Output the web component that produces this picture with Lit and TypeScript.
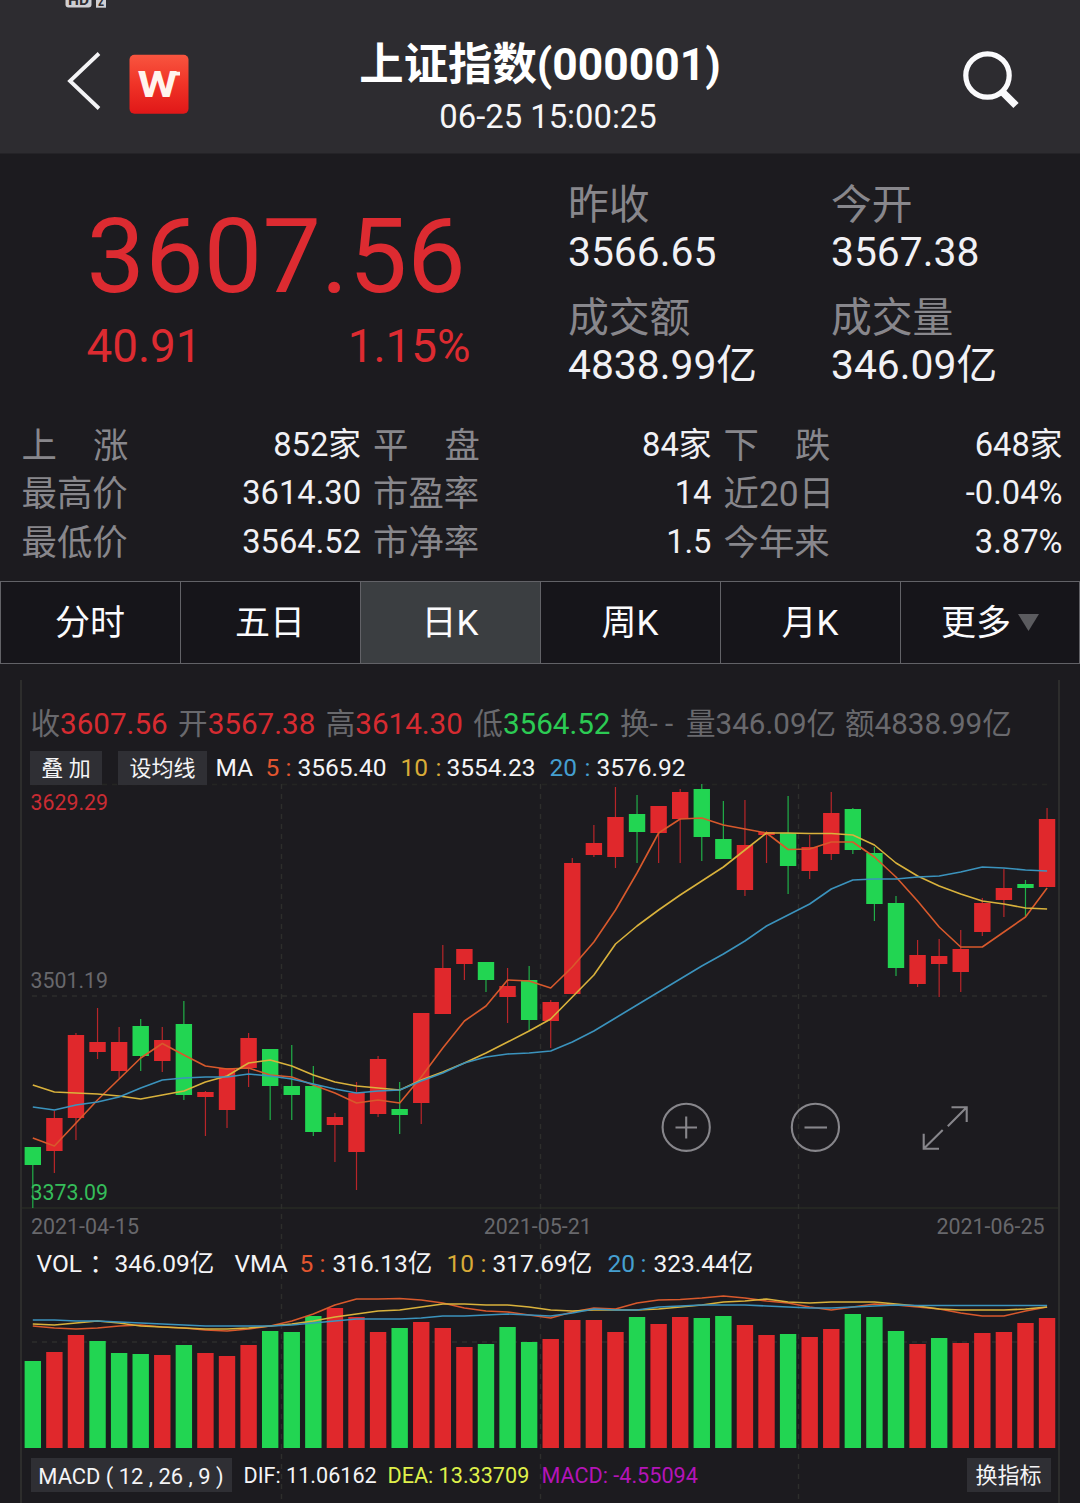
import { LitElement, html, svg, css } from "lit";
import { customElement } from "lit/decorators.js";
import { classMap } from "lit/directives/class-map.js";

type Dir = "r" | "g";
/** direction, body top, body bottom, wick top, wick bottom, volume bar top */
type Bar = [Dir, number, number, number, number, number];

const BARS: Bar[] = [
  ["g", 1147, 1165, 1147, 1208, 1361],
  ["r", 1118, 1151, 1111, 1173, 1352],
  ["r", 1035, 1118, 1033, 1140, 1335],
  ["r", 1042, 1052, 1008, 1059, 1341],
  ["r", 1042, 1071, 1027, 1078, 1353],
  ["g", 1026, 1056, 1019, 1071, 1354],
  ["r", 1040, 1061, 1027, 1072, 1355],
  ["g", 1024, 1095, 1001, 1100, 1345],
  ["r", 1092, 1097, 1091, 1136, 1353],
  ["r", 1068, 1110, 1068, 1128, 1356],
  ["r", 1038, 1068, 1033, 1087, 1345],
  ["g", 1049, 1086, 1049, 1120, 1331],
  ["g", 1086, 1095, 1045, 1120, 1332],
  ["g", 1086, 1132, 1066, 1136, 1316],
  ["r", 1117, 1125, 1113, 1162, 1308],
  ["r", 1093, 1152, 1082, 1190, 1317],
  ["r", 1059, 1114, 1056, 1117, 1332],
  ["g", 1109, 1115, 1082, 1134, 1328],
  ["r", 1013, 1103, 1013, 1124, 1322],
  ["r", 968, 1014, 945, 1014, 1328],
  ["r", 949, 964, 949, 980, 1347],
  ["g", 962, 980, 962, 992, 1344],
  ["r", 986, 997, 968, 1023, 1327],
  ["g", 980, 1020, 966, 1031, 1342],
  ["r", 1002, 1021, 1000, 1048, 1339],
  ["r", 863, 994, 858, 994, 1320],
  ["r", 843, 855, 825, 857, 1320],
  ["r", 817, 857, 787, 868, 1332],
  ["g", 814, 832, 795, 863, 1317],
  ["r", 806, 833, 806, 863, 1324],
  ["r", 792, 819, 789, 863, 1317],
  ["g", 789, 837, 784, 861, 1318],
  ["g", 839, 859, 801, 859, 1316],
  ["r", 845, 890, 800, 896, 1325],
  ["r", 832, 835, 831, 863, 1335],
  ["g", 833, 866, 796, 894, 1334],
  ["r", 847, 871, 835, 879, 1337],
  ["r", 813, 854, 792, 860, 1329],
  ["g", 809, 850, 808, 854, 1314],
  ["g", 853, 904, 847, 921, 1317],
  ["g", 903, 968, 896, 976, 1331],
  ["r", 955, 984, 940, 987, 1344],
  ["r", 956, 964, 939, 997, 1338],
  ["r", 949, 972, 930, 992, 1343],
  ["r", 903, 932, 898, 936, 1333],
  ["r", 888, 900, 869, 917, 1332],
  ["g", 884, 888, 880, 917, 1323],
  ["r", 819, 887, 808, 887, 1318],
];

/* The volume pane colours by session change, which differs from the body colour on these days. */
const VOLUME_DIR: Record<number, Dir> = { 3: "g", 4: "g", 22: "g", 42: "g", 46: "r" };

const MA5 = [1138, 1146, 1123, 1100, 1079, 1058, 1043.5, 1055, 1066, 1069, 1068, 1075, 1077, 1085, 1093, 1103, 1100, 1103, 1077, 1048, 1021, 1006, 980, 981, 988, 967, 942, 910, 873, 833, 819, 818, 825, 829, 833, 849.5, 849, 842, 842, 857, 877, 901, 927, 947, 947, 932, 917, 888];
const MA10 = [1085, 1092, 1093, 1094, 1096, 1099, 1095, 1091, 1082, 1076, 1063, 1060, 1066, 1075, 1082, 1086, 1088, 1090, 1080, 1072, 1063, 1053, 1042, 1031, 1019, 997, 975, 944, 926, 910, 895, 881, 867, 850, 833, 833, 833.5, 833.5, 835, 845, 863, 876, 886, 894, 901, 904, 908, 909];
const MA20 = [1107, 1110, 1105, 1102, 1097, 1088, 1080, 1078, 1077, 1077, 1074, 1076, 1079, 1084, 1089, 1093, 1091, 1090, 1081, 1073, 1063, 1057, 1054, 1053, 1051, 1042, 1031, 1018, 1005, 992, 979, 966, 954, 941, 926, 915, 904, 889, 880, 879, 879, 877, 876, 872, 867, 868, 870, 871];
const VMA5 = [1326, 1328, 1329, 1328, 1326, 1325, 1327, 1328, 1330, 1331, 1329, 1326, 1321, 1314, 1305, 1299, 1299, 1298.5, 1300, 1303, 1308, 1311, 1312, 1315, 1318, 1312, 1308, 1309, 1303, 1300, 1299.5, 1298, 1296, 1298, 1301, 1303, 1307, 1310, 1307, 1304, 1305, 1307, 1309, 1313, 1316, 1316, 1311, 1307];
const VMA10 = [1324, 1325, 1323, 1321, 1323, 1326, 1327, 1328, 1329, 1329, 1328, 1326, 1324, 1321, 1317, 1314, 1311, 1310, 1307, 1304, 1304, 1305, 1305, 1307, 1310, 1311, 1310, 1310, 1310, 1309, 1307, 1305, 1302, 1301, 1299, 1302, 1303, 1302, 1302, 1302, 1304, 1306, 1309, 1310, 1310, 1310, 1309, 1307];
const VMA20 = [1320, 1320, 1321, 1321, 1322, 1323, 1324, 1325, 1326, 1326, 1326, 1326, 1325, 1323, 1321, 1319, 1319, 1319, 1318, 1316, 1316, 1315, 1314, 1315, 1316, 1313, 1309, 1310, 1310, 1307, 1306, 1305, 1305, 1305, 1306, 1307, 1308, 1308, 1307, 1306, 1305, 1305.5, 1305.5, 1305.5, 1305.5, 1305.5, 1305.5, 1305.5];

const cx = (i: number) => 32.8 + i * 21.58;
const line = (ys: number[]) => ys.map((y, i) => `${cx(i).toFixed(1)},${y}`).join(" ");

const STATS: [string, string, string][][] = [
  [["上", "涨", "852家"], ["平", "盘", "84家"], ["下", "跌", "648家"]],
  [["最高价", "", "3614.30"], ["市盈率", "", "14"], ["近20日", "", "-0.04%"]],
  [["最低价", "", "3564.52"], ["市净率", "", "1.5"], ["今年来", "", "3.87%"]],
];

const TABS = ["分时", "五日", "日K", "周K", "月K", "更多"];

const base = css`
  :host {
    display: block;
  }
  * {
    box-sizing: border-box;
  }
  svg {
    display: block;
  }
`;

@customElement("quote-header")
class QuoteHeader extends LitElement {
  static styles = [
    base,
    css`
      .bar {
        display: grid;
        grid-template-columns: 65px 64px 61px 1fr 190px;
        grid-template-rows: 10px 143px;
        height: 154px;
        background: #2d2c30;
        border-bottom: 1px solid #242327;
      }
      .status {
        grid-column: 2;
      }
      .back {
        grid-row: 2;
        grid-column: 2;
        padding-top: 40px;
      }
      .logo {
        grid-row: 2;
        grid-column: 3;
        padding-top: 44px;
      }
      .titles {
        grid-row: 2;
        grid-column: 4;
        display: flex;
        flex-direction: column;
        align-items: center;
        padding-top: 26px;
        color: #fff;
      }
      .title {
        font-size: 44.4px;
        font-weight: 700;
        line-height: 58px;
        white-space: nowrap;
      }
      .time {
        font-size: 32.8px;
        line-height: 44px;
        padding: 1px 0 0 16px;
        color: #f6f6f8;
      }
      .search {
        grid-row: 2;
        grid-column: 5;
        padding: 38px 0 0 69px;
      }
      .tiny {
        font: 700 15px Roboto, sans-serif;
      }
      .mark {
        font: 700 36px Roboto, sans-serif;
      }
    `,
  ];
  render() {
    return html`
      <header class="bar">
        <svg class="status" width="46" height="10" viewBox="65 0 46 10">
          <rect x="65.5" y="-8" width="26" height="15.5" rx="3" fill="#cfcfd3" />
          <text class="tiny" x="68" y="4.6" textLength="21" lengthAdjust="spacingAndGlyphs" fill="#2d2c30">HD</text>
          <rect x="96" y="-6" width="10" height="13.7" fill="#cfcfd3" />
          <text class="tiny" x="98" y="6" textLength="6" lengthAdjust="spacingAndGlyphs" fill="#2d2c30">2</text>
        </svg>
        <svg class="back" width="40" height="103" viewBox="65 50 40 63">
          <path d="M99 53.5 L70 81 L99 108.5" fill="none" stroke="#f4f4f6" stroke-width="3.8" />
        </svg>
        <svg class="logo" width="60" height="105" viewBox="129 54 60 61">
          <defs>
            <linearGradient id="g" x1="0" y1="0" x2="0" y2="1">
              <stop offset="0" stop-color="#f8553f" />
              <stop offset="0.5" stop-color="#f03327" />
              <stop offset="1" stop-color="#e01718" />
            </linearGradient>
          </defs>
          <rect x="129.5" y="54.8" width="59" height="59" rx="5" fill="url(#g)" />
          <text class="mark" x="137.5" y="97.3" textLength="40" lengthAdjust="spacingAndGlyphs" fill="#fff4ee">W</text>
          <path d="M172 71.7H180V75.6H173Z" fill="#fff4ee" />
        </svg>
        <div class="titles">
          <div class="title">上证指数(000001)</div>
          <div class="time">06-25 15:00:25</div>
        </div>
        <svg class="search" width="130" height="100" viewBox="959 48 61 62">
          <circle cx="987.5" cy="75.5" r="21.7" fill="none" stroke="#fafafc" stroke-width="5.2" />
          <path d="M1001.5 91 L1016 105.5" stroke="#fafafc" stroke-width="7.4" />
        </svg>
      </header>
    `;
  }
}

@customElement("quote-summary")
class QuoteSummary extends LitElement {
  static styles = [
    base,
    css`
      .top {
        display: grid;
        grid-template-columns: 568px 263px 1fr;
        height: 264px;
        padding-top: 25px;
      }
      .main {
        color: #dd2b31;
        padding-left: 86.5px;
        width: 470.5px;
      }
      .price {
        font-size: 104px;
        line-height: 124px;
        margin-top: 16px;
        letter-spacing: 0.2px;
        white-space: nowrap;
      }
      .change {
        display: flex;
        justify-content: space-between;
        font-size: 45.8px;
        line-height: 56px;
      }
      .pair {
        padding-bottom: 15px;
      }
      .label {
        font-size: 40.8px;
        line-height: 48px;
        padding-top: 2px;
        height: 48px;
        color: #88878c;
      }
      .value {
        font-size: 40.8px;
        line-height: 50px;
        color: #f1f1f5;
        white-space: nowrap;
      }
      .stats {
        display: grid;
        grid-template-columns: 339.5px 338.5px 339px;
        column-gap: 12px;
        padding: 2.5px 0 0 21.5px;
        height: 163px;
        grid-auto-rows: 48.9px;
      }
      .cell {
        display: flex;
        justify-content: space-between;
        line-height: 49px;
        font-size: 32.7px;
        color: #f1f1f5;
      }
      .name {
        display: flex;
        justify-content: space-between;
        width: 107px;
        padding-top: 1px;
        font-size: 35.4px;
        color: #88878c;
        white-space: nowrap;
      }
    `,
  ];
  private pair(a: string, b: string) {
    return html`<div class="pair"><div class="label">${a}</div><div class="value">${b}</div></div>`;
  }
  render() {
    return html`
      <section class="top">
        <div class="main">
          <div class="price">3607.56</div>
          <div class="change"><span>40.91</span><span>1.15%</span></div>
        </div>
        <div>${this.pair("昨收", "3566.65")}${this.pair("成交额", "4838.99亿")}</div>
        <div>${this.pair("今开", "3567.38")}${this.pair("成交量", "346.09亿")}</div>
      </section>
      <section class="stats">
        ${STATS.flat().map(
          ([a, b, v]) => html`<div class="cell">
            <span class="name"><span>${a}</span>${b ? html`<span>${b}</span>` : ""}</span><span>${v}</span>
          </div>`
        )}
      </section>
    `;
  }
}

@customElement("period-tabs")
class PeriodTabs extends LitElement {
  static styles = [
    base,
    css`
      .tabs {
        display: grid;
        grid-template-columns: repeat(6, 180px);
        height: 83px;
        background: #16151a;
        border: solid #626267;
        border-width: 1px 0;
      }
      .tab {
        display: flex;
        align-items: center;
        justify-content: center;
        gap: 7px;
        border-left: 1px solid #626267;
        padding-right: 1px;
        font-size: 35px;
        line-height: 78px;
        color: #fbfbfd;
      }
      .tab span {
        padding-top: 3px;
      }
      .tab:last-child {
        border-right: 1px solid #626267;
        padding-right: 0;
      }
      .active {
        background: #3b3e41;
      }
    `,
  ];
  render() {
    return html`<nav class="tabs">
      ${TABS.map(
        (t, i) => html`<div class=${classMap({ tab: true, active: i === 2 })}>
          <span>${t}</span>
          ${i === 5 ? html`<svg width="21" height="18" viewBox="0 0 21 18"><path d="M0 0H21L10.5 17Z" fill="#5b5b5f" /></svg>` : ""}
        </div>`
      )}
    </nav>`;
  }
}

@customElement("kline-chart")
class KlineChart extends LitElement {
  static styles = [
    base,
    css`
      .chart {
        position: relative;
        height: 839px;
        padding-top: 42px;
      }
      .frame {
        position: absolute;
        inset: 0;
      }
      .row {
        position: relative;
        display: grid;
        white-space: nowrap;
        color: #f4f4f6;
      }
      .ohlc {
        grid-template-columns: 147.6px 147.6px 147.6px 146.7px 66px 159px auto;
        padding-left: 30.5px;
        font-size: 29.6px;
        line-height: 37px;
        color: #69696d;
      }
      .averages {
        grid-template-columns: 88px 97.5px 50px 20px 12px 103px 35px 11px 103px 35px 12px auto;
        padding-left: 30px;
        margin-top: 8px;
        height: 34px;
        font-size: 24.5px;
        line-height: 34px;
      }
      .chip {
        justify-self: start;
        height: 34px;
        text-align: center;
        font-size: 22px;
        line-height: 35px;
        background: #2f2f34;
      }
      .overlay {
        width: 72px;
      }
      .set {
        width: 89px;
      }
      .plot {
        position: relative;
        margin-top: -1px;
      }
      .dates {
        display: flex;
        justify-content: space-between;
        padding: 1px 35.5px 0 31px;
        height: 32px;
        font-size: 21.4px;
        line-height: 32px;
        color: #68686c;
      }
      .volumes {
        grid-template-columns: 53px 25px 120px 65px 20px 13px 114px 34px 12px 115px 33px 13px auto;
        padding: 1px 0 0 36.5px;
        height: 42px;
        font-size: 24.5px;
        line-height: 42px;
      }
      .macd {
        grid-template-columns: 213px 144px 154px 1fr 84px;
        padding: 0 29.5px 0 30.5px;
        margin-top: 8px;
        font-size: 21.6px;
        line-height: 36px;
      }
      .params {
        width: 201px;
        font-size: 21.9px;
        line-height: 37px;
        white-space: pre;
      }
      .switch {
        width: 84px;
      }
      .r { color: #d62b31; fill: #e0282c; stroke: #e0282c; }
      .g { color: #2ccb54; fill: #22d552; stroke: #22d552; }
      .m5 { color: #e3562f; }
      .m10 { color: #d9ab38; }
      .m20 { color: #459fd0; }
      .dea { color: #dff04a; }
      .hist { color: #b414b8; }
      .ln { fill: none; stroke-width: 1.6; stroke-linejoin: round; }
      .l5 { stroke: #d8592c; }
      .l10 { stroke: #d9b23c; }
      .l20 { stroke: #3b93bd; }
      .axis {
        font-family: Roboto, sans-serif;
        font-size: 21.3px;
      }
      .hi { fill: #c92c33; }
      .mid { fill: #68686c; }
      .lo { fill: #35bd5a; }
      .tool { fill: none; stroke: #87868b; stroke-width: 2.1; }
      .dash { stroke: #2d2e2c; stroke-width: 1.4; stroke-dasharray: 5 5; }
      .faint { stroke: #242523; }
    `,
  ];
  render() {
    return html`
      <section class="chart">
        <svg class="frame" width="1080" height="839" viewBox="0 664 1080 839">
          <path d="M21 680V1503M1059 680V1503" stroke="#2d2d2c" stroke-width="2" />
          <path d="M22 1208H1058" stroke="#242622" stroke-width="2" />
          <path class="dash faint" d="M32 784.5H1047" />
          <path class="dash" d="M32 996H1047M32 1342H1047" />
          <path class="dash" d="M281.5 784V1503M540.5 784V1503M798.5 784V1503" />
        </svg>
        <div class="row ohlc">
          <span>收<span class="r">3607.56</span></span>
          <span>开<span class="r">3567.38</span></span>
          <span>高<span class="r">3614.30</span></span>
          <span>低<span class="g">3564.52</span></span>
          <span>换- -</span>
          <span>量346.09亿</span>
          <span>额4838.99亿</span>
        </div>
        <div class="row averages">
          <span class="chip overlay">叠 加</span>
          <span class="chip set">设均线</span>
          <span>MA</span>
          <span class="m5">5</span><span class="m5">:</span><span>3565.40</span>
          <span class="m10">10</span><span class="m10">:</span><span>3554.23</span>
          <span class="m20">20</span><span class="m20">:</span><span>3576.92</span>
        </div>
        <svg class="plot" width="1080" height="426" viewBox="0 784 1080 426">
          ${BARS.map(
            ([d, t, b, wt, wb], i) => svg`
              <line class=${d} x1=${cx(i)} x2=${cx(i)} y1=${wt} y2=${wb} stroke-width="1.2" stroke-opacity="0.8" />
              <rect class=${d} x=${cx(i) - 8.2} y=${t} width="16.4" height=${b - t} stroke-width="0" />`
          )}
          <polyline class="ln l5" points=${line(MA5)} />
          <polyline class="ln l10" points=${line(MA10)} />
          <polyline class="ln l20" points=${line(MA20)} />
          <text class="axis hi" x="30.5" y="810">3629.29</text>
          <text class="axis mid" x="30.5" y="988">3501.19</text>
          <text class="axis lo" x="30.5" y="1200">3373.09</text>
          <g class="tool">
            <circle cx="686.2" cy="1127.3" r="23.6" />
            <path d="M675.5 1127.5H697M686.2 1116.5V1138.5" />
            <circle cx="815.4" cy="1127.3" r="23.6" />
            <path d="M804.5 1127.5H827" />
            <path d="M951.5 1107.3H966.7V1122M966.7 1107.3L947.8 1126.2M923.7 1133.8V1148.8H939M923.7 1148.8L942.7 1130" />
          </g>
        </svg>
        <div class="row dates"><span>2021-04-15</span><span>2021-05-21</span><span>2021-06-25</span></div>
        <div class="row volumes">
          <span>VOL</span><span>：</span><span>346.09亿</span><span>VMA</span>
          <span class="m5">5</span><span class="m5">:</span><span>316.13亿</span>
          <span class="m10">10</span><span class="m10">:</span><span>317.69亿</span>
          <span class="m20">20</span><span class="m20">:</span><span>323.44亿</span>
        </div>
        <svg class="plot" width="1080" height="167" viewBox="0 1283 1080 167">
          ${BARS.map(
            (bar, i) => svg`<rect class=${VOLUME_DIR[i] ?? bar[0]} x=${cx(i) - 8.2} y=${bar[5]} width="16.4" height=${1448 - bar[5]} stroke-width="0" />`
          )}
          <polyline class="ln l5" points=${line(VMA5)} />
          <polyline class="ln l10" points=${line(VMA10)} />
          <polyline class="ln l20" points=${line(VMA20)} />
        </svg>
        <div class="row macd">
          <span class="chip params">MACD ( 12 , 26 , 9 )</span>
          <span>DIF: 11.06162</span>
          <span class="dea">DEA: 13.33709</span>
          <span class="hist">MACD: -4.55094</span>
          <span class="chip switch">换指标</span>
        </div>
      </section>
    `;
  }
}

@customElement("app-root")
class AppRoot extends LitElement {
  static styles = css`
    :host {
      display: block;
      width: 1080px;
      height: 1503px;
      overflow: hidden;
      background: #1c1b1f;
      font-family: Roboto, "Noto Sans CJK SC", sans-serif;
    }
  `;
  render() {
    return html`
      <quote-header></quote-header>
      <quote-summary></quote-summary>
      <period-tabs></period-tabs>
      <kline-chart></kline-chart>
    `;
  }
}
